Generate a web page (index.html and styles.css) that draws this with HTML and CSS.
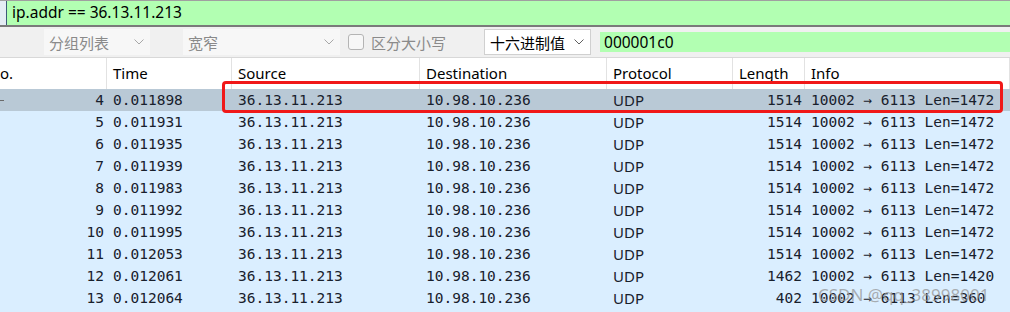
FILE: index.html
```html
<html lang="zh">
<head>
    <title>Wireshark</title>
    <link rel="stylesheet" href="styles.css">
</head>
<body>
    <div class="filterbar">
        <div class="fb-edge"></div>
        <div class="fb-input">ip.addr == 36.13.11.213</div>
    </div>

    <div class="toolbar">
        <div class="combo combo-flat combo-list">
            <span>分组列表</span>
            <svg class="chev" width="10" height="6" viewBox="0 0 10 6"><path d="M0.5 0.5 L5 5 L9.5 0.5" fill="none" stroke="#a8a8a8" stroke-width="1"/></svg>
        </div>
        <div class="combo combo-flat combo-width">
            <span>宽窄</span>
            <svg class="chev" width="10" height="6" viewBox="0 0 10 6"><path d="M0.5 0.5 L5 5 L9.5 0.5" fill="none" stroke="#a8a8a8" stroke-width="1"/></svg>
        </div>
        <label class="check">
            <span class="box"></span>
            <span>区分大小写</span>
        </label>
        <div class="combo combo-hex">
            <span>十六进制值</span>
            <svg class="chev" width="10" height="6" viewBox="0 0 10 6"><path d="M0.5 0.5 L5 5 L9.5 0.5" fill="none" stroke="#606060" stroke-width="1"/></svg>
        </div>
        <div class="search">000001c0</div>
    </div>

    <div class="table">
        <div class="row head">
            <div class="cell">o.</div>
            <div class="cell">Time</div>
            <div class="cell">Source</div>
            <div class="cell">Destination</div>
            <div class="cell">Protocol</div>
            <div class="cell">Length</div>
            <div class="cell">Info</div>
        </div>
        <div id="rows"></div>
    </div>

    <div class="mark"></div>
    <div class="watermark">CSDN @qq_38998001</div>

    <script>
        // packet list data
        const packets = [
            [4, '0.011898', 1514, 1472],
            [5, '0.011931', 1514, 1472],
            [6, '0.011935', 1514, 1472],
            [7, '0.011939', 1514, 1472],
            [8, '0.011983', 1514, 1472],
            [9, '0.011992', 1514, 1472],
            [10, '0.011995', 1514, 1472],
            [11, '0.012053', 1514, 1472],
            [12, '0.012061', 1462, 1420],
            [13, '0.012064', 402, 360]
        ];

        const rows = document.getElementById('rows');
        packets.forEach(function (p, i) {
            const row = document.createElement('div');
            row.className = 'row data' + (i === 0 ? ' selected' : '');
            row.innerHTML =
                '<div class="cell num">' + (i === 0 ? '<span class="tick"></span>' : '') + p[0] + '</div>' +
                '<div class="cell">' + p[1] + '</div>' +
                '<div class="cell">36.13.11.213</div>' +
                '<div class="cell">10.98.10.236</div>' +
                '<div class="cell proto">UDP</div>' +
                '<div class="cell num">' + p[2] + '</div>' +
                '<div class="cell">10002 \u2192 6113 Len=' + p[3] + '</div>';
            rows.appendChild(row);
        });
    </script>
</body>
</html>
```

FILE: styles.css
```css
body {
    margin: 0;
    width: 1010px;
    height: 312px;
    overflow: hidden;
    background: #daeeff;
    font-family: "Segoe UI", "Noto Sans", "Noto Sans CJK SC", sans-serif;
    position: relative;
}
.filterbar {
    display: flex;
    height: 24px;
    border-top: 1px solid #a0a0a0;
    border-bottom: 2px solid #7a7a7a;
    background: #b2ffb2;
}
.fb-edge {
    width: 6px;
    background: #e4ecf4;
    border-right: 1px solid #3c5a78;
}
.fb-input {
    padding-left: 5px;
    font-size: 15.5px;
    line-height: 23px;
    color: #000;
}
.toolbar {
    display: flex;
    align-items: center;
    height: 30px;
    padding-left: 44px;
    background: #f0f0f0;
    border-bottom: 1px solid #d8d8d8;
    font-family: "Noto Sans CJK SC", sans-serif;
    font-size: 15px;
}
.combo {
    display: flex;
    align-items: center;
    justify-content: space-between;
    box-sizing: border-box;
    height: 26px;
    padding: 0 6px 0 5px;
}
.combo-flat {
    background: #f7f7f7;
    color: #8a8a8a;
}
.combo-list {
    width: 106px;
}
.combo-width {
    width: 157px;
    margin-left: 33px;
}
.check {
    display: flex;
    align-items: center;
    margin-left: 8px;
    color: #8a8a8a;
}
.check .box {
    width: 14px;
    height: 14px;
    border: 1px solid #b4b4b4;
    border-radius: 3px;
    background: #f7f7f7;
    margin-right: 7px;
}
.combo-hex {
    width: 107px;
    margin-left: 38px;
    background: #fff;
    border: 1px solid #d0d0d0;
    color: #000;
}
.search {
    flex: 1;
    height: 20px;
    margin-left: 9px;
    padding-left: 4px;
    background: #b2ffb2;
    font-family: "Segoe UI", "Noto Sans", sans-serif;
    font-size: 15.5px;
    line-height: 20px;
    color: #000;
}
.row {
    display: grid;
    grid-template-columns: 107px 125px 188px 187px 126px 72px 1fr;
}
.head {
    height: 31px;
    background: #fff;
    font-size: 15px;
    line-height: 31px;
    color: #000;
}
.head .cell {
    border-right: 1px solid #e2e2e2;
    padding-left: 6px;
}
.head .cell:first-child {
    padding-left: 0;
}
.data {
    height: 22px;
    line-height: 22px;
    font-family: "DejaVu Sans Mono", "Liberation Mono", monospace;
    font-size: 14.5px;
    color: #18202c;
}
.data .cell {
    padding-left: 6px;
    white-space: nowrap;
}
.data .proto {
    font-family: "Segoe UI", "Noto Sans", sans-serif;
    font-size: 15px;
}
.data .num {
    text-align: right;
    padding: 0 3px 0 0;
    position: relative;
}
.selected {
    background: #b9c9d6;
}
.tick {
    position: absolute;
    left: 0;
    top: 11px;
    width: 4px;
    height: 1px;
    background: #6a6a6a;
}
.mark {
    position: absolute;
    left: 222px;
    top: 81px;
    width: 775px;
    height: 26px;
    border: 3px solid #f01818;
    border-radius: 4px;
}
.watermark {
    position: absolute;
    left: 818px;
    top: 283px;
    font-family: "Noto Sans", sans-serif;
    font-size: 17px;
    color: rgba(150, 150, 150, 0.75);
}
```
